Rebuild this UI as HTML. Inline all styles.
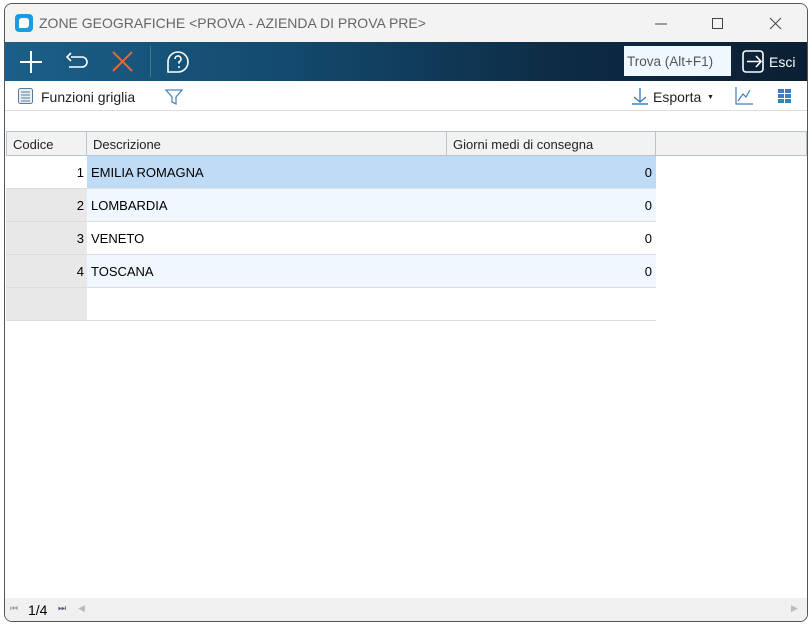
<!DOCTYPE html>
<html><head><meta charset="utf-8">
<style>
*{margin:0;padding:0;box-sizing:border-box}
body{width:811px;height:624px;background:#fff;font-family:"Liberation Sans",sans-serif;position:relative;overflow:hidden}
.win{position:absolute;left:4px;top:3px;width:804px;height:619px;border:1px solid #555;border-radius:8px;background:#fff;overflow:hidden}
.title{position:absolute;left:0;top:0;width:100%;height:38px;background:#f3f3f3}
.title .t{position:absolute;left:34px;top:11px;font-size:14px;color:#666}
.logo{position:absolute;left:10px;top:10px;width:18px;height:18px;border-radius:4px;background:#1e9be0}
.logo:after{content:"";position:absolute;left:4px;top:4px;width:10px;height:10px;border-radius:3px 3px 3px 0;background:#fff}
.tb{position:absolute;left:0;top:38px;width:100%;height:39px;background:linear-gradient(90deg,#1b5f88 0%,#134a6e 35%,#0d2b44 70%,#0b1f33 100%)}
.find{position:absolute;left:619px;top:4px;width:107px;height:30px;background:#f0f8ff;color:#555;font-size:13.5px;padding:8px 3px}
.esci{position:absolute;left:739px;top:12px;color:#fff;font-size:14px}
.tb2{position:absolute;left:0;top:77px;width:100%;height:30px;background:#fff;border-bottom:1px solid #ddd}
.tb2 span{position:absolute;font-size:14px;color:#222;top:8px}
.grid{position:absolute;left:1px;top:127px;width:801px}
.hdr{position:absolute;top:0;height:25px;background:#f2f2f2;border:1px solid #b8c4d0;border-left:none;font-size:13px;padding:5px 6px;color:#222}
.row{position:absolute;left:0;height:33px;width:650px;border-bottom:1px solid #dcdcdc;font-size:13px}
.row .c{position:absolute;left:0;top:0;width:81px;height:32px;background:#e8e8e8;text-align:right;padding:9px 3px}
.row .d{position:absolute;left:81px;top:0;width:569px;height:32px;padding:9px 4px;background:#f0f7fe}
.row .d b{font-weight:normal;position:absolute;right:4px;top:9px}
.foot{position:absolute;left:0;top:594px;width:100%;height:24px;background:#f0f0f0;font-size:14px}
</style></head><body>
<div class="win">
 <div class="title"><div class="logo"></div><div class="t">ZONE GEOGRAFICHE &lt;PROVA - AZIENDA DI PROVA PRE&gt;</div>
  <svg style="position:absolute;left:640px;top:10px" width="150" height="20"><line x1="10" y1="10" x2="22" y2="10" stroke="#444"/><rect x="67.5" y="4.5" width="10" height="10" fill="none" stroke="#444"/><path d="M125 4l11 11M136 4l-11 11" stroke="#444"/></svg>
 </div>
 <div class="tb">
  <svg width="200" height="39" style="position:absolute;left:0;top:0">
   <path d="M26 9v22M15 20h22" stroke="#fff" stroke-width="2"/>
   <path d="M66 15h11a5 5 0 0 1 0 10h-13M66 11l-4 4 4 4" stroke="#fff" stroke-width="1.6" fill="none"/>
   <path d="M108 10l19 19M127 10l-19 19" stroke="#e06a3a" stroke-width="2"/>
   <line x1="145.5" y1="4" x2="145.5" y2="35" stroke="#4e7594"/>
   <path d="M163 30 V20 A10 10 0 1 1 173 30 Z" stroke="#fff" stroke-width="1.6" fill="none"/>
   <path d="M170 17a3 3 0 1 1 4 2.8v1.8" stroke="#fff" stroke-width="1.6" fill="none"/>
   <circle cx="174" cy="25" r="1" fill="#fff"/>
  </svg>
  <div class="find">Trova (Alt+F1)</div>
  <svg width="24" height="24" style="position:absolute;left:737px;top:8px"><rect x="1" y="1" width="20" height="21" rx="3" fill="none" stroke="#fff" stroke-width="1.6"/><path d="M5 11.5h14M14 6l5 5.5-5 5.5" stroke="#fff" stroke-width="1.6" fill="none"/></svg>
  <span class="esci" style="left:764px">Esci</span>
 </div>
 <div class="tb2">
  <svg width="200" height="30" style="position:absolute;left:0;top:0"><rect x="13.5" y="7.5" width="14" height="15" rx="2" fill="#e6eef6" stroke="#5a7a9a"/><path d="M16 11h9M16 14h9M16 17h9M16 20h9" stroke="#5a7a9a"/><path d="M161 9h16l-6 7v7l-4-2v-5z" fill="none" stroke="#4a8ac0" stroke-width="1.3"/></svg>
  <span style="left:36px">Funzioni griglia</span>
  <svg width="200" height="30" style="position:absolute;left:620px;top:0"><path d="M15 7v14M9 16l6 5 6-5M7 23h16" stroke="#3a80c0" stroke-width="1.4" fill="none"/><path d="M111 6v17h17M113 20l5-7 3 3 4-7" stroke="#3a80c0" stroke-width="1.2" fill="none"/><g fill="#3a80c0"><rect x="153" y="8" width="6" height="4"/><rect x="160" y="8" width="6" height="4"/><rect x="153" y="13" width="6" height="4"/><rect x="160" y="13" width="6" height="4"/><rect x="153" y="18" width="6" height="4"/><rect x="160" y="18" width="6" height="4"/></g></svg>
  <span style="left:648px">Esporta</span><span style="left:702px;font-size:7px;top:13px">▼</span>
 </div>
 <div class="grid">
  <div class="hdr" style="left:0;width:81px;border-left:1px solid #b8c4d0">Codice</div>
  <div class="hdr" style="left:81px;width:360px">Descrizione</div>
  <div class="hdr" style="left:441px;width:209px">Giorni medi di consegna</div>
  <div class="hdr" style="left:650px;width:151px"></div>
  <div class="row" style="top:25px"><div class="c" style="background:#fff">1</div><div class="d" style="background:#c0dbf5">EMILIA ROMAGNA<b>0</b></div></div>
  <div class="row" style="top:58px"><div class="c">2</div><div class="d">LOMBARDIA<b>0</b></div></div>
  <div class="row" style="top:91px"><div class="c">3</div><div class="d" style="background:#fff">VENETO<b>0</b></div></div>
  <div class="row" style="top:124px"><div class="c">4</div><div class="d">TOSCANA<b>0</b></div></div>
  <div class="row" style="top:157px"><div class="c"></div><div class="d" style="background:#fff"></div></div>
 </div>
 <div class="foot">
  <span style="position:absolute;left:5px;top:5px;font-size:9px;color:#999">⏮</span>
  <span style="position:absolute;left:23px;top:4px">1/4</span>
  <span style="position:absolute;left:53px;top:5px;font-size:9px;color:#557">⏭</span>
  <span style="position:absolute;left:73px;top:5px;font-size:9px;color:#bbb">◀</span>
  <span style="position:absolute;left:786px;top:5px;font-size:9px;color:#bbb">▶</span>
 </div>
</div>
</body></html>
